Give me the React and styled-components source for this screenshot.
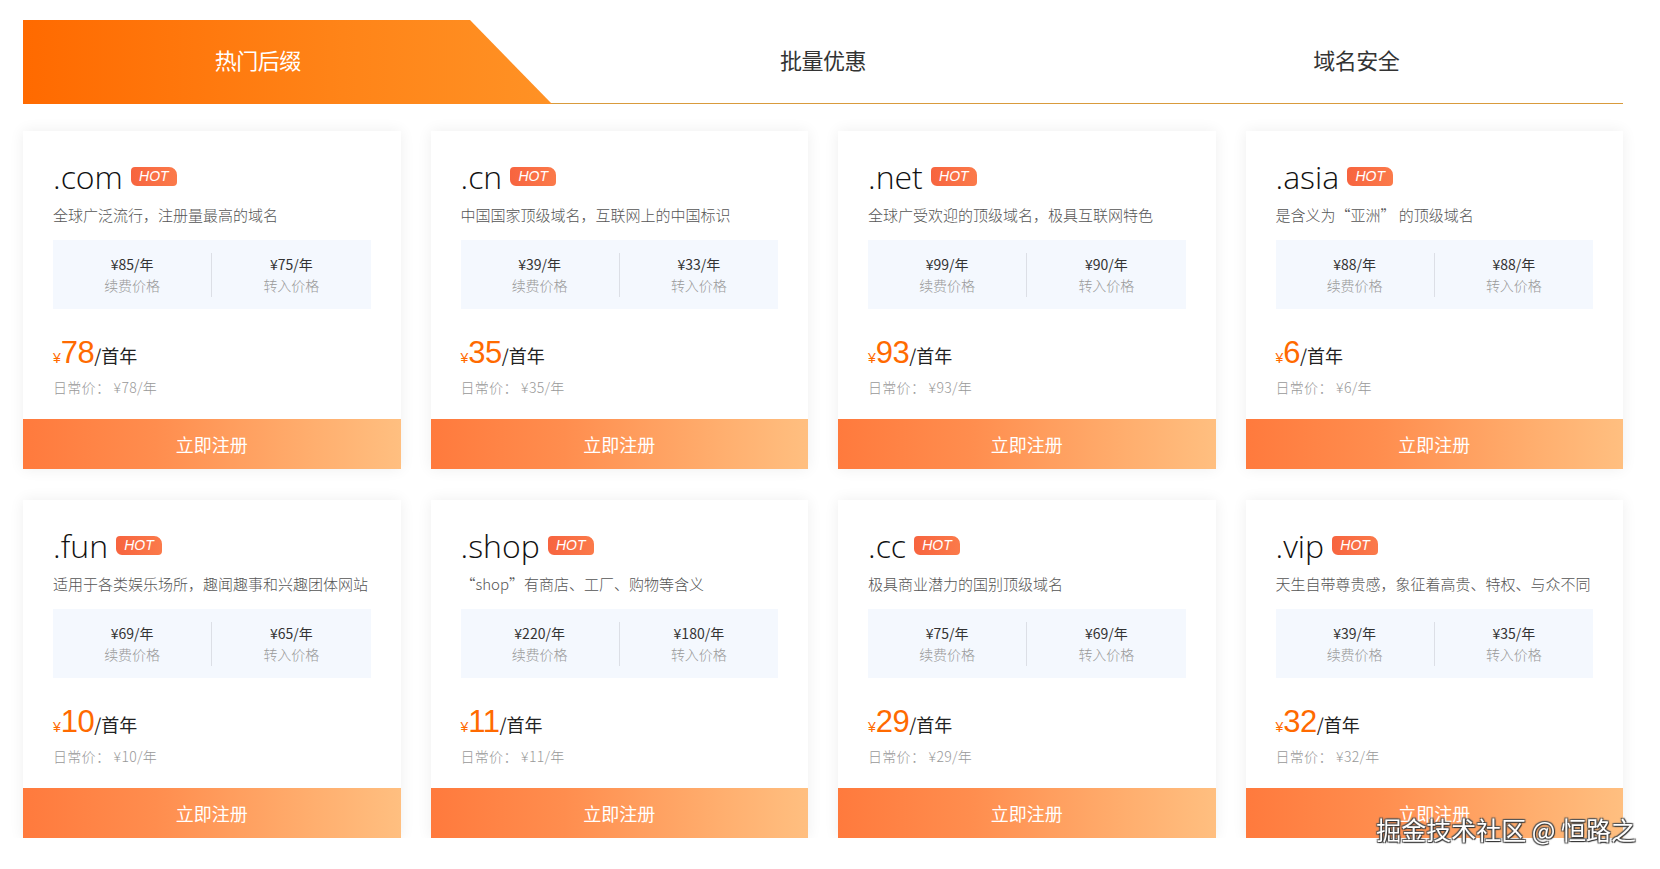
import React from "react";
import styled, { createGlobalStyle } from "styled-components";

const domains = [
	{ name: ".com", desc: "全球广泛流行，注册量最高的域名", renew: 85, transfer: 75, price: 78 },
	{ name: ".cn", desc: "中国国家顶级域名，互联网上的中国标识", renew: 39, transfer: 33, price: 35 },
	{ name: ".net", desc: "全球广受欢迎的顶级域名，极具互联网特色", renew: 99, transfer: 90, price: 93 },
	{ name: ".asia", desc: "是含义为“亚洲” 的顶级域名", renew: 88, transfer: 88, price: 6 },
	{ name: ".fun", desc: "适用于各类娱乐场所，趣闻趣事和兴趣团体网站", renew: 69, transfer: 65, price: 10 },
	{ name: ".shop", desc: "“shop”有商店、工厂、购物等含义", renew: 220, transfer: 180, price: 11 },
	{ name: ".cc", desc: "极具商业潜力的国别顶级域名", renew: 75, transfer: 69, price: 29 },
	{ name: ".vip", desc: "天生自带尊贵感，象征着高贵、特权、与众不同", renew: 39, transfer: 35, price: 32 },
];

const tabs = ["热门后缀", "批量优惠", "域名安全"];

const App = () => {
	const [active, setActive] = React.useState(0);

	return (
		<>
			<GlobalStyle />
			<Page>
				<TabBar>
					{tabs.map((t, idx) => (
						<Tab key={t} active={idx === active} onClick={() => setActive(idx)}>
							<TabLabel active={idx === active}>{t}</TabLabel>
						</Tab>
					))}
				</TabBar>

				<Grid>
					{domains.map((d) => (
						<Card key={d.name}>
							<CardBody>
								<TitleRow>
									<Domain>{d.name}</Domain>
									<Hot>HOT</Hot>
								</TitleRow>
								<Desc>{d.desc}</Desc>
								<PriceBox>
									<PriceCell>
										<strong>¥{d.renew}/年</strong>
										<span>续费价格</span>
									</PriceCell>
									<Divider />
									<PriceCell>
										<strong>¥{d.transfer}/年</strong>
										<span>转入价格</span>
									</PriceCell>
								</PriceBox>
								<BigPrice>
									<Yen>¥</Yen>
									<Num>{d.price}</Num>
									<Unit>/首年</Unit>
								</BigPrice>
								<Normal>日常价：&nbsp;¥{d.price}/年</Normal>
							</CardBody>
							<RegButton>立即注册</RegButton>
						</Card>
					))}
				</Grid>
			</Page>
			<Watermark>掘金技术社区 @ 恒路之</Watermark>
		</>
	);
};

const GlobalStyle = createGlobalStyle`
	body {
		margin: 0;
		background: #fff;
		font-family: "Noto Sans CJK SC", "Noto Sans", sans-serif;
	}
`;

const Page = styled.div`
	width: 1600px;
	padding: 20px 0 0 23px;
`;

const TabBar = styled.div`
	display: flex;
	height: 83px;
	border-bottom: 1px solid #d99b3c;
`;

const Tab = styled.div`
	flex: 1;
	display: flex;
	align-items: center;
	justify-content: center;
	cursor: pointer;
	margin-bottom: -1px;
	${(p) =>
		p.active &&
		`
		background: linear-gradient(90deg, #ff6a00 0%, #ff8418 60%, #ff9225 100%);
		clip-path: polygon(0 0, 447px 0, 529px 100%, 0 100%);
	`}
`;

const TabLabel = styled.span`
	font-size: 22px;
	color: ${(p) => (p.active ? "#fff" : "#333")};
	padding-right: ${(p) => (p.active ? "64px" : "0")};
	padding-bottom: 6px;
	letter-spacing: -0.5px;
`;

const Grid = styled.div`
	display: grid;
	grid-template-columns: repeat(4, 1fr);
	column-gap: 30px;
	row-gap: 31px;
	margin-top: 27px;
`;

const Card = styled.div`
	background: #fff;
	box-shadow: 0 0 14px rgba(0, 0, 0, 0.07);
	display: flex;
	flex-direction: column;
	height: 338px;
`;

const CardBody = styled.div`
	flex: 1;
	padding: 24px 30px 0;
`;

const TitleRow = styled.div`
	display: flex;
	align-items: center;
	height: 44px;
`;

const Domain = styled.span`
	font-family: "Open Sans", sans-serif;
	font-weight: 300;
	font-size: 32px;
	color: #111;
	line-height: 44px;
`;

const Hot = styled.span`
	margin-left: 8px;
	margin-bottom: 2px;
	width: 46px;
	height: 19px;
	border-radius: 4px 8px 4px 6px;
	background: linear-gradient(90deg, #f7643f, #fb7a4a);
	color: #fff;
	font-family: "Liberation Sans", sans-serif;
	font-style: italic;
	font-size: 14px;
	line-height: 19px;
	text-align: center;
`;

const Desc = styled.p`
	margin: 6px 0 0;
	font-size: 15px;
	font-weight: 300;
	line-height: 20px;
	color: #555;
	white-space: nowrap;
`;

const PriceBox = styled.div`
	margin-top: 15px;
	height: 69px;
	background: #f4f8fe;
	display: flex;
	align-items: center;
`;

const PriceCell = styled.div`
	flex: 1;
	display: flex;
	flex-direction: column;
	align-items: center;
	font-size: 14px;
	line-height: 21px;

	& > strong {
		font-weight: 400;
		color: #333;
	}
	& > span {
		font-weight: 300;
		color: #999;
	}
`;

const Divider = styled.div`
	width: 1px;
	height: 44px;
	background: #dcdfe6;
`;

const BigPrice = styled.div`
	margin-top: 26px;
	display: flex;
	align-items: baseline;
	color: #ff6a00;
	height: 36px;
`;

const Yen = styled.span`
	font-size: 14px;
	font-family: "Liberation Sans", sans-serif;
`;

const Num = styled.span`
	font-size: 31px;
	font-family: "Liberation Sans", sans-serif;
	letter-spacing: -0.5px;
`;

const Unit = styled.span`
	font-size: 18px;
	color: #222;
`;

const Normal = styled.div`
	margin-top: 6px;
	font-size: 14px;
	font-weight: 300;
	letter-spacing: 0.3px;
	color: #999;
`;

const RegButton = styled.button`
	height: 50px;
	border: 0;
	width: 100%;
	background: linear-gradient(90deg, #ff7a3d 0%, #ff8d4e 35%, #ffad6d 75%, #ffbf80 100%);
	color: #fff;
	font-family: "Noto Sans CJK SC", sans-serif;
	font-size: 18px;
	cursor: pointer;
`;

const Watermark = styled.div`
	position: fixed;
	right: 24px;
	bottom: 22px;
	font-family: "Noto Sans CJK SC", sans-serif;
	font-size: 25px;
	color: #fff;
	text-shadow: 1px 1px 1px #333, -1px -1px 1px #555, 1px -1px 1px #555, -1px 1px 1px #555;
	pointer-events: none;
`;

export default App;
